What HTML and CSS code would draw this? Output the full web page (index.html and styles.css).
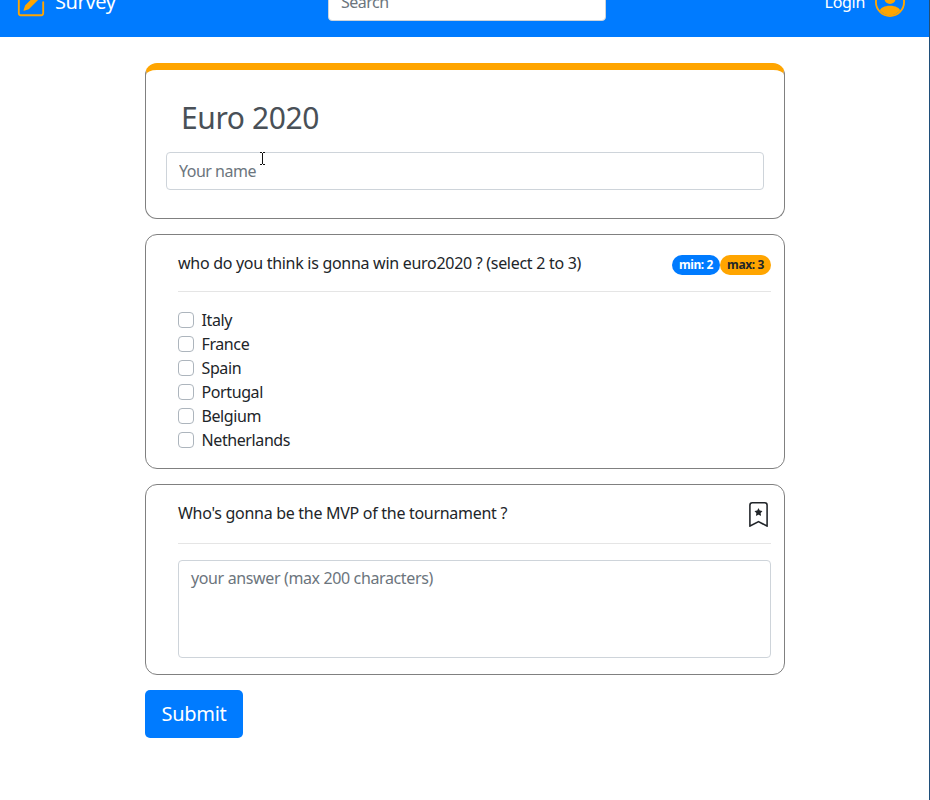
FILE: index.html
```html
<!DOCTYPE html>
<html lang="en">
<head>
<meta charset="utf-8">
<title>Survey</title>
<link rel="stylesheet" href="styles.css">
</head>
<body>
<header class="navbar">
  <div class="navbar-row">
  <a class="brand">
    <svg class="icon pencil" viewBox="0 0 16 16" fill="currentColor"><path d="M15.502 1.94a.5.5 0 0 1 0 .706L14.459 3.69l-2-2L13.502.646a.5.5 0 0 1 .707 0l1.293 1.293zm-1.75 2.456-2-2L4.939 9.21a.5.5 0 0 0-.121.196l-.805 2.414a.25.25 0 0 0 .316.316l2.414-.805a.5.5 0 0 0 .196-.12l6.813-6.814z"/><path fill-rule="evenodd" d="M1 13.5A1.5 1.5 0 0 0 2.5 15h11a1.5 1.5 0 0 0 1.5-1.5v-6a.5.5 0 0 0-1 0v6a.5.5 0 0 1-.5.5h-11a.5.5 0 0 1-.5-.5v-11a.5.5 0 0 1 .5-.5H9a.5.5 0 0 0 0-1H2.5A1.5 1.5 0 0 0 1 2.5v11z"/></svg>
    <span class="brand-name">Survey</span>
  </a>
  <input class="field search" type="text" placeholder="Search">
  <a class="login">
    <span class="login-label">Login</span>
    <svg class="icon" viewBox="0 0 16 16" fill="currentColor"><path d="M13.468 12.37C12.758 11.226 11.195 10 8 10s-4.757 1.225-5.468 2.37A6.987 6.987 0 0 0 8 15a6.987 6.987 0 0 0 5.468-2.63z"/><path d="M8 9a3 3 0 1 0 0-6 3 3 0 0 0 0 6z"/><path fill-rule="evenodd" d="M8 1a7 7 0 1 0 0 14A7 7 0 0 0 8 1zM0 8a8 8 0 1 1 16 0A8 8 0 0 1 0 8z"/></svg>
  </a>
  </div>
</header>
<main class="survey">
  <section class="card intro">
    <h1 class="title">Euro 2020</h1>
    <div class="name-row">
      <input class="field" type="text" placeholder="Your name">
      <svg class="pointer" viewBox="0 0 7 15"><path class="halo" d="M1 1.5h5M1 13.5h5M3.5 1.5v12"/><path class="beam" d="M1 1.5h2M4 1.5h2M1 13.5h2M4 13.5h2M3.5 2v11"/></svg>
    </div>
  </section>
  <section class="card question">
    <div class="question-head">
      <span class="prompt">who do you think is gonna win euro2020 ? (select 2 to 3)</span>
      <span class="badges"><span class="badge min">min: 2</span><span class="badge max">max: 3</span></span>
    </div>
    <div class="options">
      <label class="option"><input type="checkbox"><span>Italy</span></label>
      <label class="option"><input type="checkbox"><span>France</span></label>
      <label class="option"><input type="checkbox"><span>Spain</span></label>
      <label class="option"><input type="checkbox"><span>Portugal</span></label>
      <label class="option"><input type="checkbox"><span>Belgium</span></label>
      <label class="option"><input type="checkbox"><span>Netherlands</span></label>
    </div>
  </section>
  <section class="card question open">
    <div class="question-head tall">
      <span class="prompt">Who's gonna be the MVP of the tournament ?</span>
      <svg class="bookmark" viewBox="0 0 16 16" fill="currentColor"><path d="M7.84 4.1a.178.178 0 0 1 .32 0l.634 1.285a.178.178 0 0 0 .134.098l1.42.206c.145.021.204.2.098.303L9.42 6.993a.178.178 0 0 0-.051.158l.242 1.414a.178.178 0 0 1-.258.187l-1.27-.668a.178.178 0 0 0-.165 0l-1.27.668a.178.178 0 0 1-.257-.187l.242-1.414a.178.178 0 0 0-.05-.158l-1.03-1.001a.178.178 0 0 1 .098-.303l1.42-.206a.178.178 0 0 0 .134-.098L7.84 4.1z"/><path d="M2 2a2 2 0 0 1 2-2h8a2 2 0 0 1 2 2v13.5a.5.5 0 0 1-.777.416L8 13.101l-5.223 2.815A.5.5 0 0 1 2 15.5V2zm2-1a1 1 0 0 0-1 1v12.566l4.723-2.482a.5.5 0 0 1 .554 0L13 14.566V2a1 1 0 0 0-1-1H4z"/></svg>
    </div>
    <textarea class="field answer" placeholder="your answer (max 200 characters)"></textarea>
  </section>
  <button class="submit">Submit</button>
</main>
</body>
</html>
```
FILE: styles.css
```css
* { box-sizing: border-box; }
body {
  margin: 0;
  height: 800px;
  overflow: hidden;
  background: #fff;
  color: #212529;
  font: 16px/24px "Noto Sans", sans-serif;
  letter-spacing: -0.4px;
  border-right: 1px solid #1f4e79;
}
.navbar {
  display: flex;
  align-items: flex-end;
  height: 37px;
  padding: 0 24px 16px 16px;
  background: #007bff;
  color: #fff;
  overflow: hidden;
}
.navbar-row {
  flex: 1;
  display: grid;
  grid-template-columns: 312px 278px 1fr;
  height: 38px;
}
.brand, .login { display: flex; align-items: center; height: 38px; }
.brand { gap: 9px; font-size: 20px; }
.login { justify-content: flex-end; gap: 10px; letter-spacing: -0.3px; }
.icon { width: 30px; height: 30px; color: orange; flex: none; }
.pencil { margin-top: 2px; }
.field {
  display: block;
  width: 100%;
  height: 38px;
  padding: 6px 12px;
  border: 1px solid #ced4da;
  border-radius: 4px;
  background: #fff;
  color: #495057;
  font: inherit;
  letter-spacing: -0.5px;
}
.field::placeholder { color: #6c757d; opacity: 1; }
.survey { width: 640px; margin: 26px auto 0 145px; }
.card {
  margin-bottom: 15px;
  border: 1px solid #808080;
  border-radius: 12px;
}
.intro { height: 156px; padding: 29px 20px 0; border-top: 7px solid orange; }
.title {
  margin: 0 0 15px;
  padding-left: 15px;
  height: 38px;
  color: #495057;
  font-size: 30px;
  font-weight: 400;
  line-height: 38px;
  letter-spacing: -0.4px;
}
.name-row { position: relative; }
.pointer { position: absolute; left: 93px; top: -1px; width: 7px; height: 15px; fill: none; }
.halo { stroke: #fff; stroke-width: 3; }
.beam { stroke: #111; stroke-width: 1; }
.question { height: 235px; padding: 16px 13px 0 32px; }
.open { height: 191px; }
.question-head {
  display: flex;
  justify-content: space-between;
  height: 41px;
  border-bottom: 1px solid #e5e5e5;
}
.prompt { letter-spacing: -0.29px; }
.tall { height: 43px; }
.badges { display: flex; padding-top: 4px; }
.badge {
  height: 20px;
  border-radius: 10px;
  font-size: 12px;
  font-weight: 700;
  line-height: 20px;
  text-align: center;
}
.min { width: 48px; background: #007bff; color: #fff; }
.max { width: 51px; background: orange; }
.options { padding-top: 16px; }
.option { display: flex; align-items: center; height: 24px; gap: 7.5px; }
.option input {
  appearance: none;
  width: 16px;
  height: 16px;
  margin: 0;
  border: 1px solid #adb5bd;
  border-radius: 4px;
  background: #fff;
}
.bookmark { width: 25px; height: 25px; margin-top: 1px; }
.answer {
  height: 98px;
  margin-top: 16px;
  padding-top: 5px;
  resize: none;
  letter-spacing: -0.37px;
}
.submit {
  display: block;
  width: 98px;
  height: 48px;
  padding: 0;
  border: 0;
  border-radius: 5px;
  background: #007bff;
  color: #fff;
  font: inherit;
  font-size: 20px;
  letter-spacing: -0.3px;
}
```
